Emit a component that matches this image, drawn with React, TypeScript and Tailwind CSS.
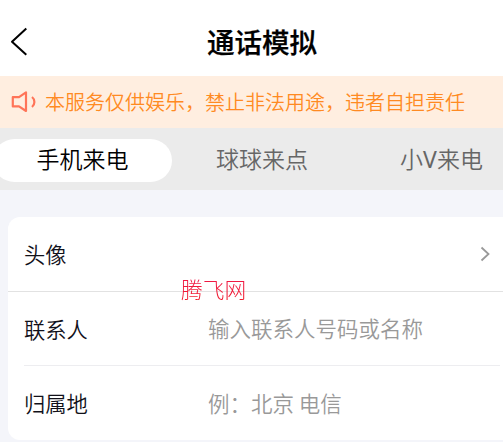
import React, { useState } from 'react';

const TABS = [
  { id: 'phone', label: '手机来电', place: 'ml-[-7px] w-[179px]' },
  { id: 'qq', label: '球球来点', place: 'w-[180px]' },
  { id: 'v', label: <>小<span className="font-['Noto_Sans'] font-normal leading-none">V</span>来电</>, place: 'w-[179px]' },
];

const FIELDS = [
  { id: 'contact', label: '联系人', placeholder: '输入联系人号码或名称' },
  { id: 'region', label: '归属地', placeholder: '例：北京 电信' },
];

export default function CallSimulatorPage() {
  const [activeTab, setActiveTab] = useState('phone');
  const [values, setValues] = useState<Record<string, string>>({});

  return (
    <div className="w-full h-[442px] overflow-hidden bg-[#f4f5fa] font-['Noto_Sans_CJK_SC',sans-serif] font-[350]">
      {/* Header */}
      <header className="relative h-[76px] bg-white flex items-center justify-center">
        <button type="button" aria-label="返回" className="absolute left-[10px] top-[27px]">
          <svg width="18" height="30" viewBox="0 0 18 30" fill="none" stroke="#000" strokeWidth="2">
            <path d="M16.3 1.5 L2 14.7 L16.3 27.7" strokeLinejoin="round" />
          </svg>
        </button>
        <h1 className="ml-[21px] mt-[6px] text-[27.5px] leading-[40px] font-medium text-black [-webkit-text-stroke:0.25px_#000]">通话模拟</h1>
      </header>

      {/* Notice */}
      <div className="h-[52px] bg-[#ffeee0] flex items-center pl-[11px]">
        <svg width="26" height="22" viewBox="0 0 26 22" fill="none" stroke="#ff7458" strokeWidth="2.2">
          <path d="M1.8 6.2 H8 L15 1.4 V20 L8 15.4 H1.8 Z" strokeLinejoin="round" />
          <path d="M21 6 C24.2 8.5 24.2 13.5 21 16" />
        </svg>
        <p className="ml-[8px] text-[20px] leading-[30px] whitespace-nowrap text-[#ff8a22]">
          本服务仅供娱乐，禁止非法用途，违者自担责任
        </p>
      </div>

      {/* Tabs */}
      <div className="h-[62px] bg-[#ebebeb] flex items-start overflow-hidden pt-[11px]">
        {TABS.map((tab) => (
          <button
            key={tab.id}
            type="button"
            onClick={() => setActiveTab(tab.id)}
            className={`h-[43px] shrink-0 rounded-full text-[23px] leading-[34px] pb-[5px] ${tab.place} ${activeTab === tab.id ? 'bg-white text-black' : 'text-[#666666]'}`}
          >
            {tab.label}
          </button>
        ))}
      </div>

      {/* Form */}
      <div className="relative mt-[27px] ml-[8px] h-[223px] bg-white rounded-l-[12px]">
        <div className="h-[75px] border-b border-[#e2e2e2] flex items-center justify-between pl-[16px] pr-[12px]">
          <span className="text-[21.3px] text-[#11111a]">头像</span>
          <svg width="11" height="16" viewBox="0 0 11 16" fill="none" stroke="#999" strokeWidth="1.8">
            <path d="M1.5 1.5 L8.5 8 L1.5 14.5" />
          </svg>
        </div>
        {FIELDS.map((field) => (
          <label
            key={field.id}
            className="ml-[16px] mr-[3px] h-[74px] border-b border-[#ededf0] last-of-type:border-0 flex items-center"
          >
            <span className="w-[184px] text-[21.3px] text-[#11111a]">{field.label}</span>
            <input
              type="text"
              value={values[field.id] ?? ''}
              onChange={(e) => setValues({ ...values, [field.id]: e.target.value })}
              placeholder={field.placeholder}
              className="flex-1 min-w-0 text-[21.5px] outline-none placeholder:text-[#999999]"
            />
          </label>
        ))}
        <span className="absolute left-[173px] top-[56px] text-[21.7px] leading-[32px] font-light bg-gradient-to-b from-[#f0184c] to-[#f01820] bg-clip-text text-transparent">
          腾飞网
        </span>
      </div>
    </div>
  );
}
